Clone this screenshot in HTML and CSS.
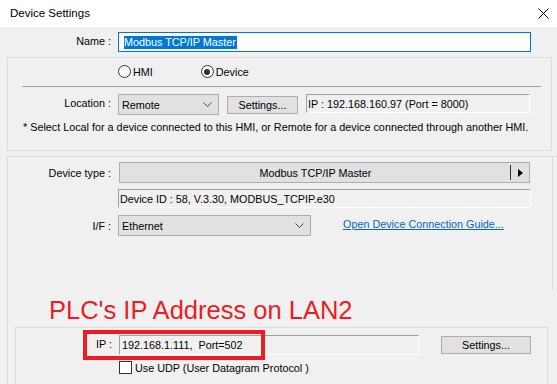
FILE: index.html
```html
<!DOCTYPE html>
<html>
<head>
<meta charset="utf-8">
<link rel="stylesheet" href="styles.css">
</head>
<body>
<div class="dialog">
  <div class="titlebar">
    <span class="title">Device Settings</span>
    <svg class="close" width="11" height="11" viewBox="0 0 11 11"><path d="M0.5 0.5L10.5 10.5M10.5 0.5L0.5 10.5" stroke="#000" stroke-width="1"/></svg>
  </div>
  <div class="row name-row">
    <label class="lbl">Name :</label>
    <div class="textbox focused"><span class="sel">Modbus TCP/IP Master</span></div>
  </div>

  <div class="group group1">
    <div class="radios">
      <span class="radio"></span><span class="rlabel">HMI</span>
      <span class="radio checked"></span><span class="rlabel">Device</span>
    </div>
    <div class="sep"></div>
    <div class="row loc-row">
      <label class="lbl loc-lbl">Location :</label>
      <div class="combo loc-combo"><span>Remote</span><svg class="chev" width="9" height="5" viewBox="0 0 9 5"><path d="M0.5 0.5L4.5 4.5L8.5 0.5" fill="none" stroke="#444" stroke-width="1"/></svg></div>
      <div class="btn loc-btn">Settings...</div>
      <div class="sunken ipinfo">IP : 192.168.160.97 (Port = 8000)</div>
    </div>
    <div class="note">* Select Local for a device connected to this HMI, or Remote for a device connected through another HMI.</div>
  </div>

  <div class="group2">
    <div class="group2-upper">
      <div class="row dt-row">
        <label class="lbl">Device type :</label>
        <div class="btn dtype"><span class="dtext">Modbus TCP/IP Master</span><span class="dsep"></span><svg class="darrow" width="5" height="8" viewBox="0 0 5 8"><path d="M0 0L5 4L0 8Z" fill="#000"/></svg></div>
      </div>
      <div class="row id-row">
        <div class="sunken devid">Device ID : 58, V.3.30, MODBUS_TCPIP.e30</div>
      </div>
      <div class="row if-row">
        <label class="lbl">I/F :</label>
        <div class="combo if-combo"><span>Ethernet</span><svg class="chev" width="9" height="5" viewBox="0 0 9 5"><path d="M0.5 0.5L4.5 4.5L8.5 0.5" fill="none" stroke="#444" stroke-width="1"/></svg></div>
        <a class="link">Open Device Connection Guide...</a>
      </div>
    </div>
    <div class="annot">PLC's IP Address on LAN2</div>
    <div class="group group3">
      <div class="row ip-row">
        <label class="lbl">IP :</label>
        <div class="sunken ipfield">192.168.1.111,&nbsp; Port=502</div>
        <div class="btn ip-btn">Settings...</div>
      </div>
      <div class="row udp-row">
        <span class="check"></span><span class="clabel">Use UDP (User Datagram Protocol )</span>
      </div>
      <div class="redbox"></div>
    </div>
  </div>
</div>
</body>
</html>
```

FILE: styles.css
```css
* { box-sizing: border-box; }
html, body { margin: 0; padding: 0; }
body {
  width: 557px;
  height: 384px;
  overflow: hidden;
  background: #f0f0f0;
  font-family: "Liberation Sans", Arial, sans-serif;
  font-size: 10.8px;
  color: #000;
}
.dialog { width: 557px; height: 384px; }
.titlebar {
  height: 27px;
  background: #fff;
  display: flex;
  align-items: center;
  justify-content: space-between;
  padding: 0 8px 2px 10px;
}
.title { font-size: 11.5px; }
.close { margin-top: 1px; }
.row { display: flex; align-items: center; }
.lbl { text-align: right; flex: none; margin-right: 7px; }
.name-row { margin-top: 5px; height: 20px; }
.name-row .lbl { width: 111px; margin-top: -2px; }
.textbox {
  width: 413px; height: 20px;
  background: #fff;
  border: 1px solid #0078d7;
  padding-left: 5px;
  display: flex; align-items: center;
}
.sel { background: #0078d7; color: #fff; line-height: 13px; padding-right: 1px; }

.group { border: 1px solid #dcdcdc; }
.group1 {
  margin: 5px 0 0 7px;
  width: 545px;
  height: 94px;
}
.radios { display: flex; align-items: center; height: 13px; margin-top: 7px; padding-left: 110px; }
.radio {
  width: 13px; height: 13px; border-radius: 50%;
  border: 1px solid #333; background: #fff;
  position: relative; flex: none;
}
.radio.checked::after {
  content: ""; position: absolute; left: 2.5px; top: 2.5px;
  width: 6px; height: 6px; border-radius: 50%; background: #333;
}
.rlabel { margin-left: 2px; }
.rlabel:nth-of-type(2) { margin-right: 48px; }
.sep { height: 1px; background: #a0a0a0; margin: 8px 0 0 14px; width: 519px; }
.loc-row { margin-top: 7px; height: 21px; }
.group1 .lbl, .group2 .lbl { width: 103px; }
.loc-lbl { margin-top: -3px; }
.combo {
  height: 21px;
  background: #e1e1e1;
  border: 1px solid #adadad;
  display: flex; align-items: center; justify-content: space-between;
  padding: 0 6px 0 3px;
}
.loc-combo { width: 101px; }
.btn {
  background: #e1e1e1;
  border: 1px solid #adadad;
  display: flex; align-items: center; justify-content: center;
}
.loc-btn { width: 71px; height: 18px; margin-left: 8px; }
.sunken {
  background: #f0f0f0;
  border-top: 1px solid #a0a0a0;
  border-left: 1px solid #a0a0a0;
  border-right: 1px solid #fff;
  border-bottom: 1px solid #fff;
  display: flex; align-items: center;
  padding-left: 1px;
}
.ipinfo { width: 224px; height: 19px; margin-left: 8px; align-self: flex-start; }
.note { margin: 6px 0 0 15px; white-space: nowrap; }

.group2 {
  margin: 5px 0 0 7px;
  border-left: 1px solid #dcdcdc;
  border-top: 1px solid #dcdcdc;
  height: 229px;
}
.group2-upper { border-right: 1px solid #dcdcdc; width: 545px; height: 133px; padding-top: 5px; }
.dt-row { height: 21px; }
.dtype { width: 411px; height: 21px; margin-left: 1px; position: relative; justify-content: flex-start; }
.dtext { width: 391px; text-align: center; }
.dsep { position: absolute; left: 390px; top: 2px; width: 1px; height: 15px; background: #333; }
.darrow { position: absolute; left: 398px; top: 6px; }
.id-row { margin-top: 6px; padding-left: 110px; }
.devid { width: 413px; height: 19px; }
.if-row { margin-top: 7px; height: 21px; }
.if-combo { width: 193px; }
.link { color: #0066cc; text-decoration: underline; margin-left: 32px; margin-top: -3px; }

.annot {
  color: #ed1c24;
  font-family: "Liberation Sans", Arial, sans-serif;
  font-size: 25.5px;
  line-height: 29px;
  margin: 6px 0 0 41px;
  white-space: nowrap;
}
.group3 {
  margin: 2px 0 0 7px;
  width: 533px;
  height: 58px;
  position: relative;
}
.ip-row { margin-top: 7px; height: 20px; align-items: flex-start; }
.group3 .lbl { width: 96px; margin-top: 3px; }
.ipfield { width: 300px; height: 20px; padding-left: 2px; }
.ip-btn { width: 90px; height: 18px; margin-left: 22px; margin-top: 1px; }
.udp-row { margin-top: 6px; padding-left: 103px; height: 13px; }
.check { width: 13px; height: 13px; border: 1px solid #333; background: #fff; flex: none; }
.clabel { margin-left: 3px; }
.redbox {
  position: absolute;
  left: 67px; top: 2px;
  width: 182px; height: 30px;
  border: 4px solid #ed1c24;
}
```
